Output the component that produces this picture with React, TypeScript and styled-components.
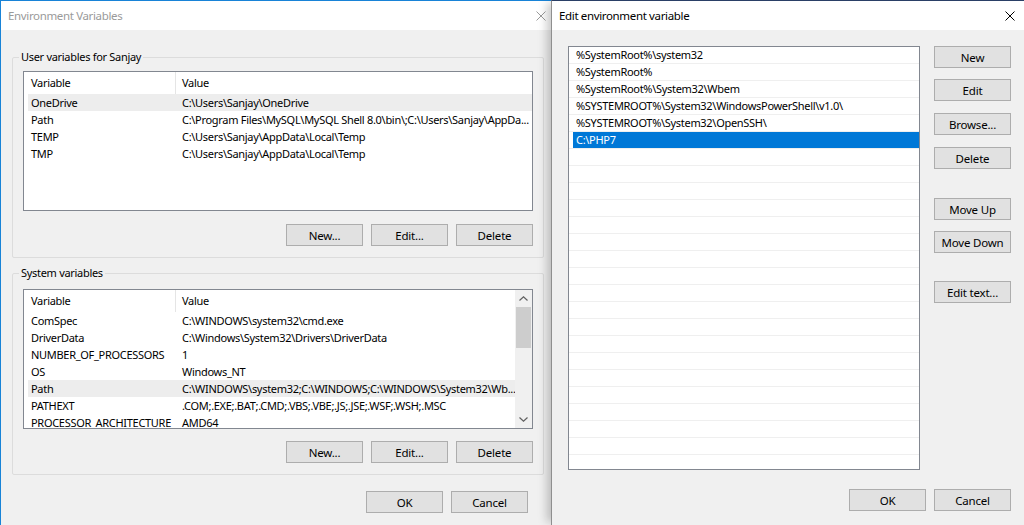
import React from "react";
import styled, { createGlobalStyle } from "styled-components";

const GlobalStyle = createGlobalStyle`
  html, body {
    margin: 0;
    padding: 0;
  }
  body {
    font-family: "Noto Sans", "Segoe UI", sans-serif;
    font-size: 11px;
    letter-spacing: -0.3px;
    color: #000;
    background: #f0f0f0;
  }
`;

const Desktop = styled.div`
  width: 1024px;
  height: 525px;
  display: flex;
  overflow: hidden;
  background: #f0f0f0;
`;

const LeftWindow = styled.div`
  width: 551px;
  flex-shrink: 0;
  height: 525px;
  box-sizing: border-box;
  display: flex;
  flex-direction: column;
  border-left: 1px solid #1883d7;
  border-top: 1px solid #1883d7;
  background: #f0f0f0;
`;

const RightWindow = styled.div`
  flex: 1;
  height: 525px;
  box-sizing: border-box;
  display: flex;
  flex-direction: column;
  border-top: 1px solid #2a3f66;
  border-left: 1px solid #8f8f8f;
  background: #f0f0f0;
  position: relative;
  z-index: 1;
  box-shadow: -7px 0 9px -3px rgba(0, 0, 0, 0.22);
`;

const TitleBar = styled.div<{ $inactive?: boolean; $closeInset: number }>`
  height: 29px;
  flex-shrink: 0;
  display: flex;
  align-items: center;
  justify-content: space-between;
  background: #fff;
  padding: 0 ${(p) => p.$closeInset}px 0 7px;
  font-size: 11.5px;
  letter-spacing: -0.35px;
  color: ${(p) => (p.$inactive ? "#9a9a9a" : "#000")};
  white-space: nowrap;
`;

const CloseIcon = ({ color }: { color: string }) => (
  <svg width="10" height="10" viewBox="0 0 10 10">
    <path d="M0.5 0.5 L9.5 9.5 M9.5 0.5 L0.5 9.5" stroke={color} strokeWidth="1" fill="none" />
  </svg>
);

const LeftBody = styled.div`
  flex: 1;
  display: flex;
  flex-direction: column;
  padding: 19px 7px 0 11px;
`;

const Group = styled.fieldset<{ $top?: number }>`
  margin: ${(p) => p.$top || 0}px 0 0 0;
  padding: 0 10px 11px 10px;
  border: 1px solid #dcdcdc;
  border-radius: 2px;
  min-width: 0;
  display: flex;
  flex-direction: column;
`;

const Legend = styled.legend`
  padding: 0 2px;
  margin-left: -4px;
  line-height: 16px;
`;

const ListView = styled.div<{ $top: number }>`
  margin-top: ${(p) => p.$top}px;
  height: 140px;
  box-sizing: border-box;
  border: 1px solid #828790;
  background: #fff;
  display: flex;
  overflow: hidden;
`;

const ListContent = styled.div`
  flex: 1;
  min-width: 0;
  display: flex;
  flex-direction: column;
`;

const Header = styled.div`
  height: 22px;
  flex-shrink: 0;
  display: grid;
  grid-template-columns: 151px 1fr;
`;

const HeaderCell = styled.div<{ $divider?: boolean }>`
  display: flex;
  align-items: center;
  padding: 0 0 1px ${(p) => (p.$divider ? 6 : 7)}px;
  border-left: ${(p) => (p.$divider ? "1px solid #e5e5e5" : "none")};
`;

const Row = styled.div<{ $hover?: boolean }>`
  margin-left: 4px;
  height: 17px;
  flex-shrink: 0;
  display: grid;
  grid-template-columns: 147px 1fr;
  line-height: 17px;
  background: ${(p) => (p.$hover ? "#ededed" : "transparent")};
`;

const Cell = styled.div<{ $second?: boolean }>`
  padding-left: ${(p) => (p.$second ? 7 : 3)}px;
  white-space: nowrap;
  overflow: hidden;
`;

const ScrollBar = styled.div`
  width: 17px;
  flex-shrink: 0;
  background: #f0f0f0;
  display: flex;
  flex-direction: column;
`;

const ScrollArrow = styled.div`
  height: 17px;
  display: flex;
  align-items: center;
  justify-content: center;
`;

const ScrollTrack = styled.div`
  flex: 1;
  display: flex;
  flex-direction: column;
`;

const ScrollThumb = styled.div`
  height: 41px;
  margin: 0 1px;
  background: #cdcdcd;
`;

const Chevron = ({ up }: { up?: boolean }) => (
  <svg width="9" height="5" viewBox="0 0 9 5">
    <path
      d={up ? "M0.5 4.5 L4.5 0.8 L8.5 4.5" : "M0.5 0.5 L4.5 4.2 L8.5 0.5"}
      stroke="#606060"
      strokeWidth="1.2"
      fill="none"
    />
  </svg>
);

const ButtonRow = styled.div<{ $top: number; $right?: number }>`
  display: flex;
  justify-content: flex-end;
  gap: 8px;
  margin-top: ${(p) => p.$top}px;
  margin-right: ${(p) => p.$right || 0}px;
`;

const Button = styled.button<{ $top?: number }>`
  width: 77px;
  height: 22px;
  box-sizing: border-box;
  margin: ${(p) => p.$top || 0}px 0 0 0;
  padding: 0;
  border: 1px solid #adadad;
  background: #e1e1e1;
  font-family: inherit;
  font-size: 11.5px;
  letter-spacing: -0.2px;
  color: #000;
  flex-shrink: 0;
`;

const RightBody = styled.div`
  flex: 1;
  display: flex;
  flex-direction: column;
  padding: 16px 13px 0 16px;
`;

const EditMain = styled.div`
  display: flex;
  gap: 14px;
`;

const PathList = styled.div`
  width: 352px;
  height: 424px;
  box-sizing: border-box;
  border: 1px solid #828790;
  background: #fff;
  overflow: hidden;
  display: flex;
  flex-direction: column;
`;

const PathRow = styled.div`
  height: 17px;
  flex-shrink: 0;
  box-sizing: border-box;
  border-bottom: 1px solid #efefef;
  display: flex;
`;

const PathText = styled.div<{ $selected?: boolean }>`
  flex: 1;
  margin-left: 4px;
  padding-left: 3px;
  line-height: 16px;
  white-space: nowrap;
  background: ${(p) => (p.$selected ? "#0078d7" : "transparent")};
  color: ${(p) => (p.$selected ? "#fff" : "#000")};
`;

const SideButtons = styled.div`
  display: flex;
  flex-direction: column;
`;

const userVars = [
  ["OneDrive", "C:\\Users\\Sanjay\\OneDrive"],
  ["Path", "C:\\Program Files\\MySQL\\MySQL Shell 8.0\\bin\\;C:\\Users\\Sanjay\\AppDa..."],
  ["TEMP", "C:\\Users\\Sanjay\\AppData\\Local\\Temp"],
  ["TMP", "C:\\Users\\Sanjay\\AppData\\Local\\Temp"],
];

const systemVars = [
  ["ComSpec", "C:\\WINDOWS\\system32\\cmd.exe"],
  ["DriverData", "C:\\Windows\\System32\\Drivers\\DriverData"],
  ["NUMBER_OF_PROCESSORS", "1"],
  ["OS", "Windows_NT"],
  ["Path", "C:\\WINDOWS\\system32;C:\\WINDOWS;C:\\WINDOWS\\System32\\Wb..."],
  ["PATHEXT", ".COM;.EXE;.BAT;.CMD;.VBS;.VBE;.JS;.JSE;.WSF;.WSH;.MSC"],
  ["PROCESSOR_ARCHITECTURE", "AMD64"],
];

const paths = [
  "%SystemRoot%\\system32",
  "%SystemRoot%",
  "%SystemRoot%\\System32\\Wbem",
  "%SYSTEMROOT%\\System32\\WindowsPowerShell\\v1.0\\",
  "%SYSTEMROOT%\\System32\\OpenSSH\\",
  "C:\\PHP7",
];

const sideButtons: [string, number][] = [
  ["New", 0],
  ["Edit", 11],
  ["Browse...", 12],
  ["Delete", 12],
  ["Move Up", 29],
  ["Move Down", 11],
  ["Edit text...", 28],
];

const VarTable = ({ rows, hover, scroll }: { rows: string[][]; hover: number; scroll?: boolean }) => (
  <>
    <ListContent>
      <Header>
        <HeaderCell>Variable</HeaderCell>
        <HeaderCell $divider>Value</HeaderCell>
      </Header>
      {rows.map(([name, value], i) => (
        <Row key={name + i} $hover={i === hover}>
          <Cell>{name}</Cell>
          <Cell $second>{value}</Cell>
        </Row>
      ))}
    </ListContent>
    {scroll && (
      <ScrollBar>
        <ScrollArrow>
          <Chevron up />
        </ScrollArrow>
        <ScrollTrack>
          <ScrollThumb />
        </ScrollTrack>
        <ScrollArrow>
          <Chevron />
        </ScrollArrow>
      </ScrollBar>
    )}
  </>
);

export default function App() {
  const emptyRows = Array.from({ length: 20 });
  return (
    <>
      <GlobalStyle />
      <Desktop>
        <LeftWindow>
          <TitleBar $inactive $closeInset={5}>
            <span>Environment Variables</span>
            <CloseIcon color="#9a9a9a" />
          </TitleBar>
          <LeftBody>
            <Group>
              <Legend>User variables for Sanjay</Legend>
              <ListView $top={6}>
                <VarTable rows={userVars} hover={0} />
              </ListView>
              <ButtonRow $top={13}>
                <Button>New...</Button>
                <Button>Edit...</Button>
                <Button>Delete</Button>
              </ButtonRow>
            </Group>
            <Group $top={7}>
              <Legend>System variables</Legend>
              <ListView $top={8}>
                <VarTable rows={systemVars} hover={4} scroll />
              </ListView>
              <ButtonRow $top={12}>
                <Button>New...</Button>
                <Button>Edit...</Button>
                <Button>Delete</Button>
              </ButtonRow>
            </Group>
            <ButtonRow $top={16} $right={16}>
              <Button>OK</Button>
              <Button>Cancel</Button>
            </ButtonRow>
          </LeftBody>
        </LeftWindow>
        <RightWindow>
          <TitleBar $closeInset={9}>
            <span>Edit environment variable</span>
            <CloseIcon color="#000" />
          </TitleBar>
          <RightBody>
            <EditMain>
              <PathList>
                {paths.map((p, i) => (
                  <PathRow key={p}>
                    <PathText $selected={i === paths.length - 1}>{p}</PathText>
                  </PathRow>
                ))}
                {emptyRows.map((_, i) => (
                  <PathRow key={"e" + i}>
                    <PathText />
                  </PathRow>
                ))}
              </PathList>
              <SideButtons>
                {sideButtons.map(([label, top]) => (
                  <Button key={label} $top={top}>
                    {label}
                  </Button>
                ))}
              </SideButtons>
            </EditMain>
            <ButtonRow $top={19}>
              <Button>OK</Button>
              <Button>Cancel</Button>
            </ButtonRow>
          </RightBody>
        </RightWindow>
      </Desktop>
    </>
  );
}
